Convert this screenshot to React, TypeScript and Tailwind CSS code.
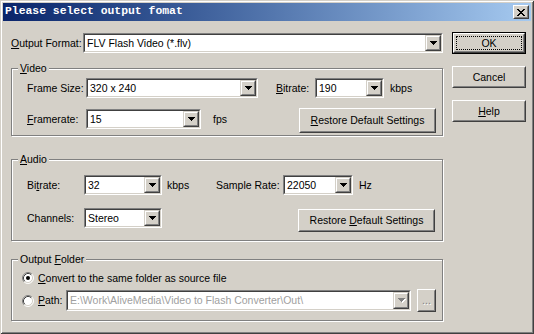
import React from 'react';

type Kids = { children?: React.ReactNode; className?: string };

const Arrow = ({ disabled }: { disabled?: boolean }) => (
  <svg width="8" height="5" viewBox="0 0 8 5" shapeRendering="crispEdges">
    {disabled && <path d="M1 1h7v1h-1v1h-1v1h-1v1h-1v-1h-1v-1h-1v-1h-1z" fill="#fff" />}
    <path d="M0 0h7v1h-1v1h-1v1h-1v1h-1v-1h-1v-1h-1v-1h-1z" fill={disabled ? '#808080' : '#000'} />
  </svg>
);

// raised 3d edge, windows classic
const Raised = ({ children, className }: Kids) => (
  <div className={`border border-t-white border-l-white border-b-[#404040] border-r-[#404040] ${className ?? ''}`}>
    <div className="h-full border border-t-[#D4D0C8] border-l-[#D4D0C8] border-b-[#808080] border-r-[#808080] bg-[#D4D0C8] flex items-center justify-center">
      {children}
    </div>
  </div>
);

const DropBtn = ({ disabled }: { disabled?: boolean }) => (
  <div className="w-[16px] h-full border border-t-[#D4D0C8] border-l-[#D4D0C8] border-b-[#404040] border-r-[#404040]">
    <div className="h-full border border-t-white border-l-white border-b-[#808080] border-r-[#808080] bg-[#D4D0C8] flex items-center justify-center pl-[1px]">
      <Arrow disabled={disabled} />
    </div>
  </div>
);

const Combo = ({ value, className, disabled }: { value: string; className: string; disabled?: boolean }) => (
  <div className={`shrink-0 border border-t-[#808080] border-l-[#808080] border-b-white border-r-white ${className}`}>
    <div className="h-full flex border border-t-[#404040] border-l-[#404040] border-b-[#D4D0C8] border-r-[#D4D0C8] bg-white">
      <div className={`flex-1 min-w-0 flex items-center pl-[2px] whitespace-nowrap overflow-hidden ${disabled ? 'text-[#A0A0A0]' : 'text-black'}`}>
        {value}
      </div>
      <DropBtn disabled={disabled} />
    </div>
  </div>
);

const Group = ({ label, children, className }: Kids & { label: React.ReactNode }) => (
  <div className={`relative w-[432px] border border-[#808080] shadow-[inset_1px_1px_#fff,1px_1px_#fff] ${className ?? ''}`}>
    <div className="absolute left-[6px] -top-[7px] px-[2px] bg-[#D4D0C8] leading-[13px]">{label}</div>
    {children}
  </div>
);

const Radio = ({ checked }: { checked?: boolean }) => (
  <svg width="12" height="12" viewBox="0 0 12 12" className="shrink-0">
    <circle cx="6" cy="6" r="5" fill="#fff" />
    <path d="M2.11 9.89A5.5 5.5 0 0 1 9.89 2.11" fill="none" stroke="#808080" strokeWidth="1" />
    <path d="M9.89 2.11A5.5 5.5 0 0 1 2.11 9.89" fill="none" stroke="#fff" strokeWidth="1" />
    <path d="M2.82 9.18A4.5 4.5 0 0 1 9.18 2.82" fill="none" stroke="#404040" strokeWidth="1" />
    <path d="M9.18 2.82A4.5 4.5 0 0 1 2.82 9.18" fill="none" stroke="#D4D0C8" strokeWidth="1" />
    {checked && <circle cx="6" cy="6" r="2" fill="#000" />}
  </svg>
);

const U = ({ children }: Kids) => <span className="underline underline-offset-[1px]">{children}</span>;

export default function App() {
  return (
    <div className="w-[534px] h-[334px] bg-[#D4D0C8] p-[3px] flex flex-col shadow-[inset_1px_1px_#D4D0C8,inset_-1px_-1px_#404040,inset_2px_2px_#fff,inset_-2px_-2px_#808080] font-['Liberation_Sans',Arial,sans-serif] text-[10.5px] text-black leading-none select-none">
      {/* title bar */}
      <div className="h-[18px] flex items-center justify-between bg-linear-to-r from-[#0A246A] to-[#A6CAF0] pl-[2px] pr-[2px]">
        <span className="font-['Liberation_Mono',monospace] font-bold text-white text-[11.4px] tracking-[0px]">Please select output fomat</span>
        <Raised className="w-[16px] h-[14px]">
          <svg width="8" height="7" viewBox="0 0 8 7" shapeRendering="crispEdges">
            <path d="M0 0h2v1h-2zM6 0h2v1h-2zM1 1h2v1h-2zM5 1h2v1h-2zM2 2h4v1h-4zM3 3h2v1h-2zM2 4h4v1h-4zM1 5h2v1h-2zM5 5h2v1h-2zM0 6h2v1h-2zM6 6h2v1h-2z" fill="#000" />
          </svg>
        </Raised>
      </div>

      <div className="flex-1 flex pl-[8px] pt-[11px]">
        {/* left side */}
        <div className="w-[433px] flex flex-col pt-[1px]">
          <div className="flex items-center h-[20px]">
            <span className="w-[72px]"><U>O</U>utput Format:</span>
            <Combo value="FLV Flash Video (*.flv)" className="w-[360px] h-[20px]" />
          </div>

          <Group label={<><U>V</U>ideo</>} className="mt-[15px] h-[68px]">
            <div className="flex items-center pl-[15px] pt-[9px]">
              <span className="w-[59px]">Frame Size:</span>
              <Combo value="320 x 240" className="w-[172px] h-[20px]" />
              <span className="ml-[18px] w-[39px]"><U>B</U>itrate:</span>
              <Combo value="190" className="w-[69px] h-[20px]" />
              <span className="ml-[6px]">kbps</span>
            </div>
            <div className="flex items-start pl-[15px] mt-[10px] pr-[6px]">
              <span className="w-[59px] mt-[1px] h-[20px] flex items-center"><U>F</U>ramerate:</span>
              <Combo value="15" className="w-[115px] h-[20px] mt-[1px]" />
              <span className="ml-[12px] mt-[1px] h-[20px] flex items-center">fps</span>
              <Raised className="ml-auto w-[137px] h-[25px]">
                <span><U>R</U>estore Default Settings</span>
              </Raised>
            </div>
          </Group>

          <Group label={<><U>A</U>udio</>} className="mt-[23px] h-[82px]">
            <div className="flex items-center pl-[15px] pt-[15px]">
              <span className="w-[57px]">Bi<U>t</U>rate:</span>
              <Combo value="32" className="w-[78px] h-[20px]" />
              <span className="ml-[5px] w-[49px]">kbps</span>
              <span className="w-[67px]">Sample Rate:</span>
              <Combo value="22050" className="w-[70px] h-[20px]" />
              <span className="ml-[6px]">Hz</span>
            </div>
            <div className="flex items-start pl-[15px] mt-[13px] pr-[7px]">
              <span className="w-[57px] h-[20px] flex items-center">Channels:</span>
              <Combo value="Stereo" className="w-[78px] h-[20px]" />
              <Raised className="ml-auto mt-[1px] w-[137px] h-[23px]">
                <span>Restore <U>D</U>efault Settings</span>
              </Raised>
            </div>
          </Group>

          <Group label={<>Output <U>F</U>older</>} className="mt-[18px] h-[62px]">
            <div className="flex items-center h-[16px] pl-[10px] mt-[10px]">
              <Radio checked />
              <span className="ml-[4px]"><U>C</U>onvert to the same folder as source file</span>
            </div>
            <div className="flex items-center h-[23px] pl-[10px] mt-[3px]">
              <Radio />
              <span className="ml-[4px] w-[28px]"><U>P</U>ath:</span>
              <Combo value="E:\Work\AliveMedia\Video to Flash Converter\Out\" className="w-[345px] h-[21px]" disabled />
              <Raised className="ml-[6px] w-[19px] h-[23px]">
                <span className="text-[#808080] [text-shadow:1px_1px_#fff]">...</span>
              </Raised>
            </div>
          </Group>
        </div>

        {/* right side buttons */}
        <div className="ml-[8px] w-[74px] flex flex-col gap-[12px]">
          <div className="h-[22px] border border-black">
            <div className="h-full border border-t-white border-l-white border-b-[#404040] border-r-[#404040]">
              <div className="h-full border border-t-[#D4D0C8] border-l-[#D4D0C8] border-b-[#808080] border-r-[#808080] p-[1px]">
                <div className="h-full border border-dotted border-black flex items-center justify-center">OK</div>
              </div>
            </div>
          </div>
          <Raised className="h-[22px]">Cancel</Raised>
          <Raised className="h-[22px]"><span><U>H</U>elp</span></Raised>
        </div>
      </div>
    </div>
  );
}
